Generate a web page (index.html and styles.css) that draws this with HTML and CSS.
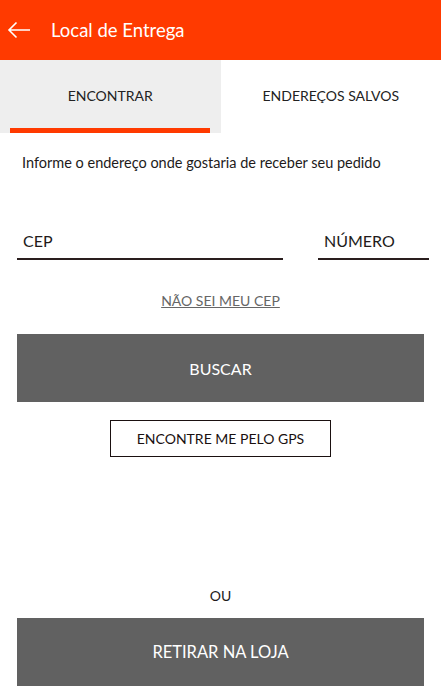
FILE: index.html
```html
<!DOCTYPE html>
<html lang="pt-BR">
    <head>
        <meta charset="utf-8">
        <title>Local de Entrega</title>
        <link rel="stylesheet" href="styles.css">
    </head>
    <body>
        <header class="app-bar">
            <button class="back-btn" aria-label="Voltar">
                <svg width="24" height="18" viewBox="0 0 24 18">
                    <path d="M23 9H2M9.5 1.5L2 9l7.5 7.5" fill="none" stroke="#fff" stroke-width="1.6"/>
                </svg>
            </button>
            <h1>Local de Entrega</h1>
        </header>

        <nav class="tabs">
            <div class="tab active">ENCONTRAR</div>
            <div class="tab">ENDEREÇOS SALVOS</div>
        </nav>

        <main class="content">
            <p class="hint">Informe o endereço onde gostaria de receber seu pedido</p>

            <div class="fields">
                <div class="field field-cep">CEP</div>
                <div class="field field-num">NÚMERO</div>
            </div>

            <a class="cep-link" href="#">NÃO SEI MEU CEP</a>

            <button class="btn-solid">BUSCAR</button>
            <button class="btn-outline">ENCONTRE ME PELO GPS</button>

            <div class="spacer"></div>

            <p class="or">OU</p>
            <button class="btn-solid btn-store">RETIRAR NA LOJA</button>
        </main>
    </body>
</html>
```

FILE: styles.css
```css
body {
    margin: 0;
    font-family: 'Lato', 'Open Sans', sans-serif;
    color: #221a1a;
    background-color: #fff;
    height: 697px;
    display: flex;
    flex-direction: column;
}

.app-bar {
    height: 60px;
    background-color: #ff3a00;
    display: flex;
    align-items: center;
}

.back-btn {
    background: none;
    border: none;
    padding: 0;
    margin: 0 0 0 7px;
    width: 24px;
    height: 18px;
    display: flex;
    cursor: pointer;
}

.app-bar h1 {
    margin: 0 0 0 20px;
    color: #fff;
    font-size: 18.5px;
    font-weight: normal;
}

.tabs {
    display: flex;
    height: 73px;
}

.tab {
    flex: 1;
    display: flex;
    align-items: center;
    justify-content: center;
    font-size: 14px;
    color: #222;
    padding-bottom: 2px;
    box-sizing: border-box;
}

.tab.active {
    background-color: #eee;
    position: relative;
}

.tab.active::after {
    content: "";
    position: absolute;
    left: 10px;
    right: 11px;
    bottom: 0;
    height: 5px;
    background-color: #ff3a00;
}

.content {
    flex: 1;
    display: flex;
    flex-direction: column;
    padding: 0 17px 11px;
}

.hint {
    margin: 21px 0 0 5px;
    font-size: 14.5px;
}

.fields {
    display: flex;
    justify-content: space-between;
    margin-top: 60px;
}

.field {
    font-size: 16px;
    padding: 0 0 8px 6px;
    border-bottom: 2px solid #2a1e1e;
}

.field-cep {
    width: 260px;
}

.field-num {
    width: 105px;
    margin-right: -5px;
}

.cep-link {
    align-self: center;
    margin-top: 32px;
    font-size: 14px;
    color: #666;
}

.btn-solid {
    margin-top: 25px;
    height: 68px;
    border: none;
    background-color: #616161;
    color: #fff;
    font-family: inherit;
    font-size: 16px;
    cursor: pointer;
}

.btn-outline {
    align-self: center;
    margin-top: 18px;
    width: 221px;
    height: 37px;
    border: 1px solid #1a1010;
    background: #fff;
    color: #1a1010;
    font-family: inherit;
    font-size: 14px;
    cursor: pointer;
}

.spacer {
    flex: 1;
}

.or {
    margin: 0;
    text-align: center;
    font-size: 14px;
}

.btn-store {
    margin-top: 14px;
    font-size: 16.5px;
}
```
